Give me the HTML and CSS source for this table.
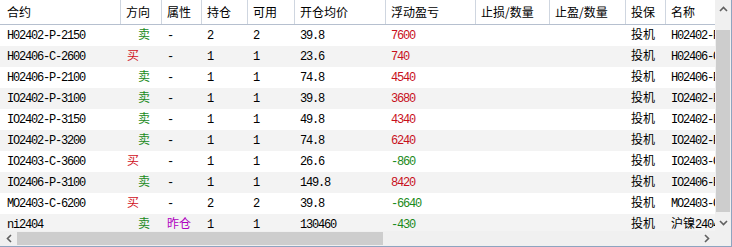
FILE: index.html
```html
<!DOCTYPE html>
<html>
<head>
<meta charset="utf-8">
<link rel="stylesheet" href="styles.css">
</head>
<body>
<div class="grid-view">
  <div class="viewport">
    <div class="row head">
      <div class="c">合约</div><div class="c">方向</div><div class="c">属性</div><div class="c">持仓</div><div class="c">可用</div><div class="c">开仓均价</div><div class="c">浮动盈亏</div><div class="c">止损/数量</div><div class="c">止盈/数量</div><div class="c">投保</div><div class="c">名称</div>
    </div>
    <div class="row">
      <div class="c m first">H02402-P-2150</div><div class="c cj sell">卖</div><div class="c m">-</div><div class="c m">2</div><div class="c m">2</div><div class="c m">39.8</div><div class="c m up">7600</div><div class="c"></div><div class="c"></div><div class="c cj">投机</div><div class="c m">H02402-P-2150</div>
    </div>
    <div class="row alt">
      <div class="c m first">H02406-C-2600</div><div class="c cj buy">买</div><div class="c m">-</div><div class="c m">1</div><div class="c m">1</div><div class="c m">23.6</div><div class="c m up">740</div><div class="c"></div><div class="c"></div><div class="c cj">投机</div><div class="c m">H02406-C-2600</div>
    </div>
    <div class="row">
      <div class="c m first">H02406-P-2100</div><div class="c cj sell">卖</div><div class="c m">-</div><div class="c m">1</div><div class="c m">1</div><div class="c m">74.8</div><div class="c m up">4540</div><div class="c"></div><div class="c"></div><div class="c cj">投机</div><div class="c m">H02406-P-2100</div>
    </div>
    <div class="row alt">
      <div class="c m first">IO2402-P-3100</div><div class="c cj sell">卖</div><div class="c m">-</div><div class="c m">1</div><div class="c m">1</div><div class="c m">39.8</div><div class="c m up">3680</div><div class="c"></div><div class="c"></div><div class="c cj">投机</div><div class="c m">IO2402-P-3100</div>
    </div>
    <div class="row">
      <div class="c m first">IO2402-P-3150</div><div class="c cj sell">卖</div><div class="c m">-</div><div class="c m">1</div><div class="c m">1</div><div class="c m">49.8</div><div class="c m up">4340</div><div class="c"></div><div class="c"></div><div class="c cj">投机</div><div class="c m">IO2402-P-3150</div>
    </div>
    <div class="row alt">
      <div class="c m first">IO2402-P-3200</div><div class="c cj sell">卖</div><div class="c m">-</div><div class="c m">1</div><div class="c m">1</div><div class="c m">74.8</div><div class="c m up">6240</div><div class="c"></div><div class="c"></div><div class="c cj">投机</div><div class="c m">IO2402-P-3200</div>
    </div>
    <div class="row">
      <div class="c m first">IO2403-C-3600</div><div class="c cj buy">买</div><div class="c m">-</div><div class="c m">1</div><div class="c m">1</div><div class="c m">26.6</div><div class="c m down">-860</div><div class="c"></div><div class="c"></div><div class="c cj">投机</div><div class="c m">IO2403-C-3600</div>
    </div>
    <div class="row alt">
      <div class="c m first">IO2406-P-3100</div><div class="c cj sell">卖</div><div class="c m">-</div><div class="c m">1</div><div class="c m">1</div><div class="c m">149.8</div><div class="c m up">8420</div><div class="c"></div><div class="c"></div><div class="c cj">投机</div><div class="c m">IO2406-P-3100</div>
    </div>
    <div class="row">
      <div class="c m first">MO2403-C-6200</div><div class="c cj buy">买</div><div class="c m">-</div><div class="c m">2</div><div class="c m">2</div><div class="c m">39.8</div><div class="c m down">-6640</div><div class="c"></div><div class="c"></div><div class="c cj">投机</div><div class="c m">MO2403-C-6200</div>
    </div>
    <div class="row alt">
      <div class="c m first">ni2404</div><div class="c cj sell">卖</div><div class="c cj prev">昨仓</div><div class="c m">1</div><div class="c m">1</div><div class="c m">130460</div><div class="c m down">-430</div><div class="c"></div><div class="c"></div><div class="c cj">投机</div><div class="c cj"><span>沪镍</span><span class="m sub">2404</span></div>
    </div>
  </div>
  <div class="vscroll">
    <div class="sbtn"><svg width="9" height="6" viewBox="0 0 9 6"><path d="M1 5 L4.5 1.5 L8 5" fill="none" stroke="#606060" stroke-width="1.6"/></svg></div>
    <div class="vtrack"><div class="vthumb"></div></div>
    <div class="sbtn"><svg width="9" height="6" viewBox="0 0 9 6"><path d="M1 1 L4.5 4.5 L8 1" fill="none" stroke="#606060" stroke-width="1.6"/></svg></div>
  </div>
  <div class="hscroll">
    <div class="hbtn"><svg width="6" height="9" viewBox="0 0 6 9"><path d="M5 1 L1.5 4.5 L5 8" fill="none" stroke="#606060" stroke-width="1.6"/></svg></div>
    <div class="htrack"><div class="hthumb"></div></div>
    <div class="hbtn"><svg width="6" height="9" viewBox="0 0 6 9"><path d="M1 1 L4.5 4.5 L1 8" fill="none" stroke="#606060" stroke-width="1.6"/></svg></div>
  </div>
  <div class="corner"></div>
</div>
</body>
</html>
```
FILE: styles.css
```css
html, body {
  margin: 0;
  padding: 0;
  background: #fff;
}
.grid-view {
  width: 731px;
  height: 246px;
  display: grid;
  grid-template-columns: 715px 16px;
  grid-template-rows: 231px 15px;
  border-right: 1px solid #8ea4c0;
  border-bottom: 1px solid #8ea4c0;
  font-family: "Noto Sans CJK SC", "Noto Sans", sans-serif;
  font-size: 12px;
  color: #000;
  background: #fff;
}
.viewport {
  overflow: hidden;
  display: flex;
  flex-direction: column;
}
.row {
  display: grid;
  grid-template-columns: 121px 41px 40px 46px 47px 91px 90px 74px 76px 40px 80px;
  height: 21px;
  flex: none;
}
.row.alt {
  background: #f3f3f3;
}
.row.head {
  height: 24px;
  border-bottom: 1px solid #b6c0cf;
}
.head .c {
  border-right: 1px solid #cfd6e0;
  padding-left: 5px;
  padding-bottom: 1px;
}
.c {
  display: flex;
  align-items: center;
  padding-left: 5px;
  white-space: nowrap;
  overflow: hidden;
  line-height: normal;
}
.c.first,
.head .c:first-child {
  padding-left: 7px;
}
.c.cj {
  padding-bottom: 5px;
}
.m {
  font-family: "Liberation Mono", "DejaVu Sans Mono", monospace;
  font-size: 12px;
  letter-spacing: -1.2px;
  padding-top: 1px;
}
.m.sub {
  padding-top: 6px;
}
.sell {
  color: #1a8a1a;
  padding-left: 17px;
}
.buy {
  color: #d0101c;
  padding-left: 6px;
}
.up {
  color: #c8101c;
}
.down {
  color: #1a8a1a;
}
.prev {
  color: #b000c0;
}
.vscroll {
  display: flex;
  flex-direction: column;
  background: #f0f0f0;
}
.sbtn {
  height: 17px;
  display: flex;
  align-items: center;
  justify-content: center;
  flex: none;
}
.vtrack {
  flex: 1;
  padding: 13px 1px 2px 1px;
  display: flex;
}
.vthumb {
  flex: 1;
  background: #cdcdcd;
}
.hscroll {
  display: flex;
  background: #f0f0f0;
}
.hbtn {
  width: 17px;
  display: flex;
  align-items: center;
  justify-content: center;
  flex: none;
}
.htrack {
  flex: 1;
  padding: 1px 0;
  display: flex;
}
.hthumb {
  width: 366px;
  background: #cdcdcd;
}
.corner {
  background: #f0f0f0;
}
```
